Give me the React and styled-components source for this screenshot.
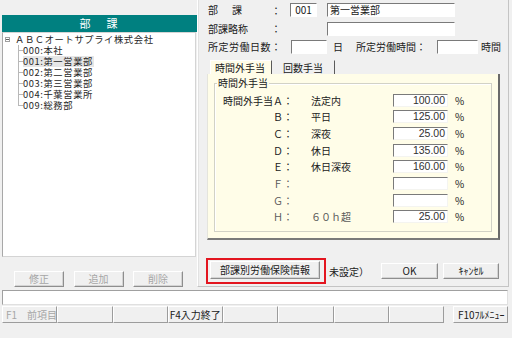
import React from 'react';
import styled, { createGlobalStyle } from 'styled-components';

const Global = createGlobalStyle`
  html, body { margin: 0; padding: 0; background: #f0f0f0; }
  body {
    font-family: "Noto Sans CJK JP", "Noto Sans", sans-serif;
    font-size: 10px;
    color: #202020;
  }
  * { box-sizing: border-box; }
`;

const Screen = styled.div`
  width: 512px;
  height: 338px;
  background: #f0f0f0;
  overflow: hidden;
  display: flex;
  flex-direction: column;
`;

const Main = styled.div`
  display: flex;
  height: 287px;
  flex: none;
`;

/* ---------- left pane ---------- */
const Left = styled.div`
  width: 197px;
  flex: none;
  padding: 15px 0 0 2px;
  display: flex;
  flex-direction: column;
`;

const TreeHeader = styled.div`
  width: 195px;
  height: 17px;
  background: #008080;
  color: #fff;
  font-size: 11px;
  line-height: 17px;
  display: flex;
  justify-content: center;
  gap: 16px;
  padding-right: 2px;
`;

const TreeBox = styled.div`
  width: 194px;
  height: 225px;
  background: #fff;
  border: 1px solid #d4d4d4;
  border-left-color: #a8a8a8;
  padding: 1px 0 0 2px;
  font-size: 9.3px;
  letter-spacing: 0.6px;
  line-height: 11px;
  color: #262626;
`;

const RootRow = styled.div`
  display: flex;
  align-items: center;
  height: 11px;
  line-height: 11px;
  white-space: nowrap;
`;

const Expander = styled.span`
  width: 5px;
  height: 5px;
  border: 1px solid #a0a0a0;
  margin: 0 5px 0 0;
  position: relative;
  flex: none;
  &::after {
    content: '';
    position: absolute;
    left: 0;
    right: 0;
    top: 1px;
    height: 1px;
    background: #606060;
  }
`;

const Children = styled.div`
  padding-left: 18px;
`;

const Node = styled.div`
  position: relative;
  height: 11px;
  white-space: nowrap;
  &::before {
    content: '';
    position: absolute;
    left: -5px;
    width: 5px;
    top: 5px;
    height: 1px;
    background: #b8b8b8;
  }
  &::after {
    content: '';
    position: absolute;
    left: -5px;
    width: 1px;
    top: 0;
    height: ${p => (p.$last ? '6px' : '11px')};
    background: #b8b8b8;
  }
`;

const NodeLabel = styled.div`
  width: fit-content;
  height: 11px;
  line-height: 11px;
  padding-right: 1px;
  background: ${p => (p.$selected ? '#e6e6e6' : 'transparent')};
`;

const LeftButtons = styled.div`
  display: flex;
  gap: 9.5px;
  margin-top: 14px;
  padding-left: 12px;
`;

const Button = styled.button`
  font-family: inherit;
  font-size: 10px;
  width: ${p => p.$w}px;
  height: ${p => p.$h || 16}px;
  margin-left: ${p => p.$ml || 0}px;
  padding: 0;
  background: #f0f0f0;
  color: ${p => (p.disabled ? '#a6a6a6' : '#202020')};
  border: 1px solid;
  border-color: #ffffff #8e8e8e #8e8e8e #ffffff;
  box-shadow: inset -1px -1px 0 #d4d4d4;
  line-height: 1;
  flex: none;
`;

/* ---------- right pane ---------- */
const Right = styled.div`
  width: 312px;
  height: 287px;
  flex: none;
  border-left: 1px solid #ffffff;
  border-right: 1px solid #c4c4c4;
  border-bottom: 1px solid #c4c4c4;
  box-shadow: inset 1px 0 0 #e2e2e2;
  padding: 3px 0 0 10px;
  display: flex;
  flex-direction: column;
`;

const Fields = styled.div`
  display: flex;
  flex-direction: column;
  gap: 4.5px;
`;

const FieldRow = styled.div`
  display: flex;
  align-items: center;
  height: 14px;
  white-space: nowrap;
`;

const Label = styled.span`
  width: ${p => p.$w}px;
  margin-left: ${p => p.$ml || 0}px;
  letter-spacing: ${p => p.$ls || 0}px;
  line-height: 14px;
  flex: none;
`;

const Colon = styled.span`
  width: 10px;
  text-align: center;
  flex: none;
`;

const TextBox = styled.div`
  width: ${p => p.$w}px;
  height: 14px;
  margin-left: ${p => p.$ml || 0}px;
  background: #fff;
  border-top: 1px solid #7a7a7a;
  border-left: 1px solid #7a7a7a;
  border-right: 1px solid #ffffff;
  border-bottom: 1px solid #ffffff;
  line-height: 12px;
  padding: 0 2px;
  text-align: ${p => p.$align || 'left'};
  flex: none;
  overflow: hidden;
`;

const Tabs = styled.div`
  display: flex;
  margin-top: 6px;
  padding-left: 2px;
  height: 14px;
`;

const Tab = styled.div`
  height: 14px;
  line-height: 13px;
  padding: ${p => (p.$active ? '0 6px 0 4px' : '0 11px 0 10px')};
  background: ${p => (p.$active ? '#fffde8' : '#f0f0f0')};
  border-left: 1px solid ${p => (p.$active ? '#ffffff' : 'transparent')};
  border-top: 1px solid ${p => (p.$active ? '#ffffff' : 'transparent')};
  border-right: 1px solid #5a5a5a;
  white-space: nowrap;
`;

const Panel = styled.div`
  width: 293px;
  height: 166px;
  margin-left: -1px;
  background: #fffde8;
  border-left: 1px solid #e4e4dc;
  border-right: 2px solid #6a6a6a;
  border-bottom: 2px solid #7a7a7a;
  padding: 9px 6px 6px 6px;
`;

const Group = styled.div`
  position: relative;
  height: 149px;
  border: 1px solid #d2d2c6;
  box-shadow: inset 1px 1px 0 #ffffff;
  padding-top: 9px;
`;

const Legend = styled.span`
  position: absolute;
  top: -7px;
  left: 2px;
  padding: 0 1px;
  background: #fffde8;
  line-height: 12px;
`;

const Grid = styled.div`
  display: grid;
  grid-template-columns: 78px 100px 55px 1fr;
  grid-auto-rows: 14px;
  row-gap: 2.7px;
  align-items: center;
`;

const RateLabel = styled.span`
  text-align: right;
  white-space: nowrap;
  color: ${p => (p.$dim ? '#5a5a5a' : '#202020')};
`;

const RateName = styled.span`
  padding-left: 18px;
  white-space: nowrap;
  color: ${p => (p.$dim ? '#5a5a5a' : '#202020')};
`;

const RateBox = styled.div`
  height: 13px;
  background: #fff;
  border-top: 1px solid #7a7a7a;
  border-left: 1px solid #7a7a7a;
  border-right: 1px solid #f4f4f0;
  border-bottom: 1px solid #f4f4f0;
  text-align: right;
  padding-right: 2px;
  line-height: 11px;
  font-family: "Liberation Sans", "Noto Sans", sans-serif;
  font-size: 10.5px;
  color: #303030;
`;

const Pct = styled.span`
  padding-left: 7px;
`;

const Actions = styled.div`
  display: flex;
  align-items: center;
  margin-top: 18px;
  margin-left: -2px;
`;

const Highlight = styled.div`
  border: 2px solid #e3151f;
  padding: 1px 4px 3px 2px;
  flex: none;
`;

const StatusText = styled.span`
  margin-left: 3px;
  width: 40px;
  white-space: nowrap;
  flex: none;
`;

/* ---------- bottom ---------- */
const MessageBar = styled.div`
  height: 15px;
  margin: 3px 4px 0 2px;
  background: #fff;
  border-top: 1px solid #a0a0a0;
  border-left: 1px solid #a0a0a0;
  border-right: 1px solid #e0e0e0;
  border-bottom: 1px solid #e0e0e0;
`;

const FKeys = styled.div`
  display: flex;
  margin-top: 1px;
  padding-left: 2px;
  height: 17px;
`;

const FKey = styled.div`
  width: 55.25px;
  height: 17px;
  flex: none;
  background: #f0f0f0;
  border: 1px solid;
  border-color: #ffffff #9c9c9c #9c9c9c #ffffff;
  padding-left: ${p => p.$pl ?? 1}px;
  margin-left: ${p => p.$ml || 0}px;
  line-height: 15px;
  white-space: nowrap;
  overflow: hidden;
  color: ${p => (p.$dim ? '#a6a6a6' : '#202020')};
`;

const tree = [
  { code: '000', name: '本社' },
  { code: '001', name: '第一営業部', selected: true },
  { code: '002', name: '第二営業部' },
  { code: '003', name: '第三営業部' },
  { code: '004', name: '千葉営業所' },
  { code: '009', name: '総務部' },
];

const rates = [
  { key: '時間外手当Ａ：', name: '法定内', value: '100.00' },
  { key: 'Ｂ：', name: '平日', value: '125.00' },
  { key: 'Ｃ：', name: '深夜', value: '25.00' },
  { key: 'Ｄ：', name: '休日', value: '135.00' },
  { key: 'Ｅ：', name: '休日深夜', value: '160.00' },
  { key: 'Ｆ：', name: '', value: '', dim: true },
  { key: 'Ｇ：', name: '', value: '', dim: true },
  { key: 'Ｈ：', name: '６０ｈ超', value: '25.00', dim: true },
];

const fkeys = [
  { label: 'F1　前項目', dim: true, pl: 3 },
  { label: '' },
  { label: '' },
  { label: 'F4入力終了' },
  { label: '' },
  { label: '' },
  { label: '' },
  { label: '' },
];

export default function App() {
  return (
    <>
      <Global />
      <Screen>
        <Main>
          <Left>
            <TreeHeader>
              <span>部</span>
              <span>課</span>
            </TreeHeader>
            <TreeBox>
              <RootRow>
                <Expander />
                ＡＢＣオートサプライ株式会社
              </RootRow>
              <Children>
                {tree.map((n, i) => (
                  <Node key={n.code} $last={i === tree.length - 1}>
                    <NodeLabel $selected={n.selected}>
                      {n.code}:{n.name}
                    </NodeLabel>
                  </Node>
                ))}
              </Children>
            </TreeBox>
            <LeftButtons>
              <Button $w={50} disabled>修正</Button>
              <Button $w={50} disabled>追加</Button>
              <Button $w={50} disabled>削除</Button>
            </LeftButtons>
          </Left>

          <Right>
            <Fields>
              <FieldRow>
                <Label $w={63} $ls={2}>部　課</Label>
                <Colon>：</Colon>
                <TextBox $w={27} $ml={9} $align="center">001</TextBox>
                <TextBox $w={128} $ml={10}>第一営業部</TextBox>
              </FieldRow>
              <FieldRow>
                <Label $w={63}>部課略称</Label>
                <Colon>：</Colon>
                <TextBox $w={128} $ml={46} />
              </FieldRow>
              <FieldRow>
                <Label $w={83} $ls={0.5}>所定労働日数：</Label>
                <TextBox $w={36} />
                <Label $w={10} $ml={6}>日</Label>
                <Label $w={81} $ml={13}>所定労働時間：</Label>
                <TextBox $w={41} />
                <Label $w={22} $ml={3}>時間</Label>
              </FieldRow>
            </Fields>

            <Tabs>
              <Tab $active>時間外手当</Tab>
              <Tab>回数手当</Tab>
            </Tabs>
            <Panel>
              <Group>
                <Legend>時間外手当</Legend>
                <Grid>
                  {rates.map(r => (
                    <React.Fragment key={r.key}>
                      <RateLabel $dim={r.dim}>{r.key}</RateLabel>
                      <RateName $dim={r.dim}>{r.name}</RateName>
                      <RateBox>{r.value}</RateBox>
                      <Pct>%</Pct>
                    </React.Fragment>
                  ))}
                </Grid>
              </Group>
            </Panel>

            <Actions>
              <Highlight>
                <Button $w={110} $h={18}>部課別労働保険情報</Button>
              </Highlight>
              <StatusText>未設定）</StatusText>
              <Button $w={57} $h={16} $ml={12}>OK</Button>
              <Button $w={56} $h={16} $ml={5}>ｷｬﾝｾﾙ</Button>
            </Actions>
          </Right>
        </Main>

        <MessageBar />
        <FKeys>
          {fkeys.map((f, i) => (
            <FKey key={i} $dim={f.dim} $pl={f.pl}>
              {f.label}
            </FKey>
          ))}
          <FKey $ml={9} $pl={4}>F10ﾌﾙﾒﾆｭｰ</FKey>
        </FKeys>
      </Screen>
    </>
  );
}
